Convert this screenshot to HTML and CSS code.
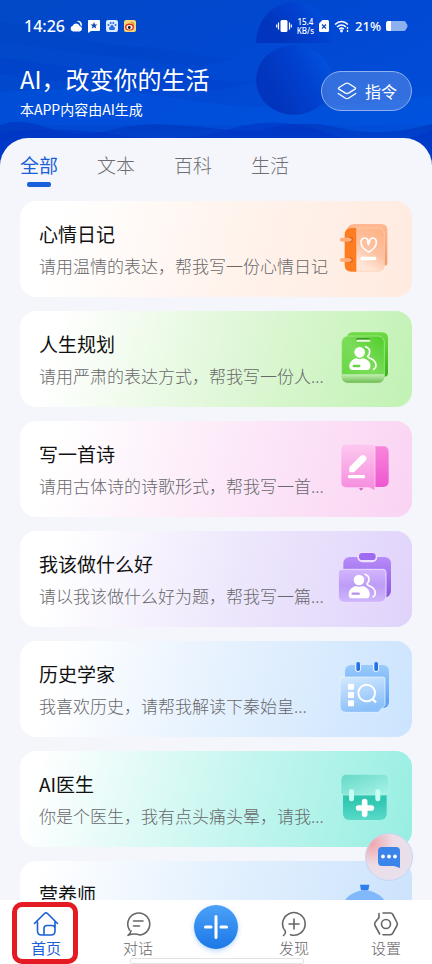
FILE: index.html
```html
<!DOCTYPE html>
<html lang="zh-CN">
    <head>
        <meta charset="utf-8">
        <meta name="viewport" content="width=device-width, initial-scale=1">
        <title>AI</title>
        <link rel="stylesheet" href="styles.css">
    </head>

    <body>
        <div class="app">

            <header class="header">
                <!-- sea and spheres behind the header -->
                <svg class="header-bg" viewBox="0 0 432 170" preserveAspectRatio="xMidYMin slice" aria-hidden="true">
                    <defs>
                        <linearGradient id="sea" x1="0" y1="0" x2="1" y2="1">
                            <stop offset="0" stop-color="#0149c6"/>
                            <stop offset=".45" stop-color="#0148d2"/>
                            <stop offset="1" stop-color="#0150dc"/>
                        </linearGradient>
                        <linearGradient id="ball" x1=".15" y1=".5" x2="1" y2=".1">
                            <stop offset="0" stop-color="#0235bd"/>
                            <stop offset=".5" stop-color="#0141cf"/>
                            <stop offset="1" stop-color="#0156e2"/>
                        </linearGradient>
                        <linearGradient id="swell" x1="0" y1="0" x2="0" y2="1">
                            <stop offset="0" stop-color="#0038c0" stop-opacity=".8"/>
                            <stop offset="1" stop-color="#0038c0" stop-opacity=".1"/>
                        </linearGradient>
                    </defs>
                    <rect width="432" height="170" fill="url(#sea)"/>
                    <path d="M0 22C50 28 80 44 130 46S200 60 240 58L200 66C140 62 60 50 0 42z" fill="#003ab8" opacity=".2"/>
                    <path d="M0 58C50 62 90 74 140 73S210 84 256 81L220 90C140 88 60 84 0 74z" fill="#0038c6" opacity=".25"/>
                    <path d="M0 92Q100 84 190 100T432 96V125H0z" fill="#0058e4" opacity=".4"/>
                    <path d="M256 43A38 41 0 0 1 332 43z" fill="url(#ball)"/>
                    <ellipse cx="294" cy="80" rx="38" ry="35" fill="url(#ball)"/>
                    <path d="M0 125Q20 117 48 128T110 130T190 126T258 131Q300 118 340 128T432 124V170H0z" fill="url(#swell)"/>
                    <path d="M0 132Q60 126 120 135T230 129T330 134T432 130V170H0z" fill="#0033c4" opacity=".55"/>
                </svg>

                <div class="status">
                    <span class="status-time">14:26</span>
                    <svg width="66" height="14" viewBox="0 0 66 14" aria-hidden="true">
                        <path d="M3 12.500a3 3 0 0 1-.3-5.800 3.800 3.800 0 0 1 7 .3 2.800 2.800 0 0 1 0 5.500zM6.500 2.200a3.800 3.800 0 0 1 5 5.300l-1-1.200a4.800 4.800 0 0 0-4-4.100z" fill="#fff"/>
                        <path d="M19 1h10q1 0 1 1v9q0 1-1 1h-8l-3 2V2q0-1 1-1z" fill="#fff"/>
                        <path d="M24 3l1 2.500h2.500l-2 1.500.8 2.600L24 8.200 21.700 9.600l.8-2.600-2-1.500H23z" fill="#1747b0"/>
                        <rect x="36" y="1" width="12" height="12" rx="2" fill="#d9ebff"/>
                        <g fill="#2d6be0">
                            <circle cx="38.500" cy="6" r="1"/><circle cx="40.700" cy="4" r="1"/><circle cx="43.300" cy="4" r="1"/><circle cx="45.500" cy="6" r="1"/>
                            <path d="M42 5.500l3 3.500q.5 2-1.500 2h-3q-2 0-1.500-2z"/>
                        </g>
                        <rect x="54" y="1" width="12" height="12" rx="2" fill="#fbd474"/>
                        <ellipse cx="59.500" cy="8" rx="4.500" ry="3.600" fill="#d8301f"/>
                        <ellipse cx="59.500" cy="8.300" rx="3" ry="2.300" fill="#fff"/>
                        <circle cx="59.300" cy="8.500" r="1.400" fill="#111"/>
                        <path d="M61 3.500q3-.5 3 2.500" fill="none" stroke="#e77c21"/>
                    </svg>
                    <span class="status-gap"></span>
                    <svg width="16" height="14" viewBox="0 0 16 14" aria-hidden="true">
                        <rect x="4.500" y="1" width="7" height="12" rx="1.500" fill="#fff"/>
                        <path d="M2.500 3.500v7M13.500 3.500v7M.7 5.500v3M15.300 5.500v3" stroke="#fff" stroke-width="1.200"/>
                    </svg>
                    <span class="status-speed"><span>15.4</span><span>KB/s</span></span>
                    <svg width="10" height="14" viewBox="0 0 10 14" aria-hidden="true">
                        <path d="M3.500 1H8.500q1.500 0 1.500 1.500v9q0 1.500-1.500 1.500h-7Q0 13 0 11.500v-7z" fill="#fff"/>
                        <path d="M3 5.500l4 4M7 5.500l-4 4" stroke="#1049b4" stroke-width="1.300"/>
                    </svg>
                    <svg width="16" height="14" viewBox="0 0 16 14" fill="none" stroke="#fff" stroke-width="1.600" aria-hidden="true">
                        <path d="M1 5.500Q7.500-.5 14 5.500M3 8q4.500-4 9 0M5.200 10.200q2.300-2 4.600 0"/>
                        <circle cx="7.500" cy="12" r=".6"/>
                        <path d="M13.500 8v2M13.500 11v2" stroke-width="1.300"/>
                    </svg>
                    <span class="status-battery">21%</span>
                    <svg width="22" height="12" viewBox="0 0 22 12" aria-hidden="true">
                        <path d="M2.500 1H18q2 0 2 2 1.500 1 1.500 3T20 9q0 2-2 2H2.500Q0 11 0 8.500v-5Q0 1 2.500 1z" fill="#8db1ee"/>
                        <path d="M2.500 1H5v10H2.500Q0 11 0 8.500v-5Q0 1 2.500 1z" fill="#fff"/>
                    </svg>
                </div>

                <div class="hero">
                    <div class="hero-text">
                        <h1>AI，改变你的生活</h1>
                        <p>本APP内容由AI生成</p>
                    </div>
                    <button class="order-btn" type="button">
                        <svg width="20" height="18" viewBox="0 0 20 18" fill="none" stroke="#fff" stroke-width="1.300" stroke-linecap="round" stroke-linejoin="round" aria-hidden="true">
                            <path d="M8.500 1.500q1.500-.8 3 0L18 5.500q1.200.8 0 1.600l-6.500 4q-1.500.8-3 0L2 7.100q-1.200-.8 0-1.600z"/>
                            <path d="M1.200 11.500l7.300 4.700q1.500.8 3 0l7.300-4.700"/>
                        </svg>
                        指令
                    </button>
                </div>
            </header>

            <main class="sheet">
                <nav class="tabs">
                    <a class="tab active" href="#all">全部</a>
                    <a class="tab" href="#text">文本</a>
                    <a class="tab" href="#wiki">百科</a>
                    <a class="tab" href="#life">生活</a>
                </nav>

                <div class="list">
                    <article class="card orange">
                        <div class="card-text">
                            <h2>心情日记</h2>
                            <p>请用温情的表达，帮我写一份心情日记</p>
                        </div>
                        <svg class="card-icon" viewBox="51 60 168 168" aria-hidden="true">
                            <defs>
                                <linearGradient id="o1" x1="0" y1="0" x2="0" y2="1"><stop offset="0" stop-color="#ffb891"/><stop offset="1" stop-color="#f29a69"/></linearGradient>
                                <linearGradient id="o2" x1="1" y1="0" x2=".6" y2="1"><stop offset="0" stop-color="#ffb083"/><stop offset=".6" stop-color="#fdc1a0"/><stop offset="1" stop-color="#ffe6d8"/></linearGradient>
                            </defs>
                            <path d="M103 72h81q18 0 18 18v99q0 8-8 8L180 90H80q5-18 23-18z" fill="url(#o1)"/>
                            <path d="M108 84h66q19 0 19 19v92q0 19-19 19h-66z" fill="url(#o2)" stroke="#ffd1b5" stroke-width="2"/>
                            <path d="M94 84h15v131H94q-20 0-20-20v-91q0-20 20-20z" fill="#ff7d22"/>
                            <path d="M65 119h26M65 180h26" stroke="#ffac78" stroke-width="11" stroke-linecap="round"/>
                            <path d="M89 112q8 0 8 7t-8 8M89 173q8 0 8 7t-8 8" fill="none" stroke="#cf5718" stroke-width="3"/>
                            <path d="M146 134q-6-8-2-13-2-7-10-7-12 1-11 15 2 16 23 27 21-11 23-27 1-14-11-15-10 1-10 15" fill="none" stroke="#fff" stroke-width="5" stroke-linecap="round" stroke-linejoin="round"/>
                            <rect x="121" y="170" width="48" height="11" rx="4" fill="#fff"/>
                        </svg>
                    </article>

                    <article class="card green">
                        <div class="card-text">
                            <h2>人生规划</h2>
                            <p>请用严肃的表达方式，帮我写一份人...</p>
                        </div>
                        <svg class="card-icon" viewBox="51 62 168 168" aria-hidden="true">
                            <defs>
                                <linearGradient id="g1" x1="0" y1="0" x2="0" y2="1"><stop offset="0" stop-color="#6ddb43"/><stop offset="1" stop-color="#38b21c"/></linearGradient>
                                <linearGradient id="g2" x1="1" y1="0" x2="0" y2="1"><stop offset="0" stop-color="#4fcd29"/><stop offset=".5" stop-color="#7bdd5a"/><stop offset="1" stop-color="#65d540"/></linearGradient>
                                <linearGradient id="g3" x1="0" y1="0" x2="0" y2="1"><stop offset="0" stop-color="#c5f0b4"/><stop offset="1" stop-color="#70bd55"/></linearGradient>
                            </defs>
                            <path d="M99 69h87q18 0 18 18v104q0 10-11 12L80 84q4-15 19-15z" fill="url(#g1)"/>
                            <rect x="65" y="80" width="128" height="140" rx="19" fill="url(#g2)" stroke="#c0f0a8" stroke-width="2"/>
                            <path d="M65 195h128v6q0 19-19 19H84q-19 0-19-19z" fill="url(#g3)"/>
                            <rect x="108" y="86" width="42" height="10" rx="5" fill="#3c9f22"/>
                            <path d="M112 94h36" stroke="#efffe9" stroke-width="6" stroke-linecap="round"/>
                            <circle cx="119" cy="129" r="16" fill="#fff"/>
                            <path d="M108 147q11 5 23 0 22 8 20 24 0 11-10 11H98q-10 0-10-11 0-17 20-24z" fill="#fff"/>
                            <path d="M137 112q12 4 12 15 0 8-6 14 1 4 8 6 17 8 17 22 0 7-7 11" fill="none" stroke="#fff" stroke-width="5" stroke-linecap="round"/>
                            <path d="M101 170h17" stroke="#68d345" stroke-width="7" stroke-linecap="round"/>
                        </svg>
                    </article>

                    <article class="card pink">
                        <div class="card-text">
                            <h2>写一首诗</h2>
                            <p>请用古体诗的诗歌形式，帮我写一首...</p>
                        </div>
                        <svg class="card-icon" viewBox="51 63 168 168" aria-hidden="true">
                            <defs>
                                <linearGradient id="p1" x1="0" y1="0" x2="0" y2="1"><stop offset="0" stop-color="#f985db"/><stop offset="1" stop-color="#ed57d0"/></linearGradient>
                                <linearGradient id="p2" x1="0" y1="0" x2="0" y2="1"><stop offset="0" stop-color="#fdc9f0"/><stop offset="1" stop-color="#f58add"/></linearGradient>
                            </defs>
                            <path d="M115 205h17l-9 10z" fill="#d854be"/>
                            <path d="M155 82h34q17 0 17 17v88q0 17-17 17h-34z" fill="url(#p1)"/>
                            <path d="M80 75h74q11 0 11 11v129l-17-9H80q-17 0-17-17V92q0-17 17-17z" fill="url(#p2)" stroke="#ffe3f9" stroke-width="2"/>
                            <path d="M88 160v-15l34-35q7-5 14 1 7 7 1 14l-35 35z" fill="#fff"/>
                            <rect x="84" y="168" width="51" height="10" rx="4" fill="#fff"/>
                        </svg>
                    </article>

                    <article class="card purple">
                        <div class="card-text">
                            <h2>我该做什么好</h2>
                            <p>请以我该做什么好为题，帮我写一篇...</p>
                        </div>
                        <svg class="card-icon" viewBox="51 65 168 168" aria-hidden="true">
                            <defs>
                                <linearGradient id="v1" x1="0" y1="0" x2="0" y2="1"><stop offset="0" stop-color="#b88cfa"/><stop offset="1" stop-color="#8858dd"/></linearGradient>
                                <linearGradient id="v2" x1="0" y1="0" x2="0" y2="1"><stop offset="0" stop-color="#d2b5ff"/><stop offset=".5" stop-color="#bd9cf7"/><stop offset="1" stop-color="#cfb7fb"/></linearGradient>
                            </defs>
                            <rect x="70" y="86" width="143" height="121" rx="19" fill="url(#v1)"/>
                            <rect x="112" y="72" width="60" height="30" rx="15" fill="#eee1ff"/>
                            <rect x="117" y="74" width="50" height="21" rx="10" fill="#9d6af1"/>
                            <path d="M66 123h123q9 0 9 9v69q0 21-21 21H75q-20 0-20-20v-68q0-11 11-11z" fill="url(#v2)" stroke="#eadcff" stroke-width="3"/>
                            <circle cx="117" cy="155" r="16" fill="#fff"/>
                            <path d="M106 173q11 5 23 0 22 8 20 26 0 11-10 11H96q-10 0-10-11 0-19 20-26z" fill="#fff"/>
                            <path d="M135 138q12 4 12 15 0 8-6 14 1 4 8 6 17 8 17 22 0 7-7 11" fill="none" stroke="#fff" stroke-width="5" stroke-linecap="round"/>
                            <path d="M98 196h18" stroke="#b48ff1" stroke-width="7" stroke-linecap="round"/>
                        </svg>
                    </article>

                    <article class="card blue">
                        <div class="card-text">
                            <h2>历史学家</h2>
                            <p>我喜欢历史，请帮我解读下秦始皇...</p>
                        </div>
                        <svg class="card-icon" viewBox="51 66 168 168" aria-hidden="true">
                            <defs>
                                <linearGradient id="b1" x1="0" y1="0" x2="0" y2="1"><stop offset="0" stop-color="#9acbfc"/><stop offset="1" stop-color="#579df0"/></linearGradient>
                                <linearGradient id="b2" x1="0" y1="0" x2=".3" y2="1"><stop offset="0" stop-color="#d5eaff"/><stop offset="1" stop-color="#8bc0f9"/></linearGradient>
                            </defs>
                            <rect x="75" y="81" width="132" height="129" rx="18" fill="url(#b1)"/>
                            <rect x="105" y="74" width="18" height="28" rx="9" fill="#e5f2ff"/>
                            <rect x="159" y="74" width="18" height="28" rx="9" fill="#e5f2ff"/>
                            <rect x="109" y="72" width="11" height="27" rx="5" fill="#2771e7"/>
                            <rect x="163" y="72" width="11" height="27" rx="5" fill="#2771e7"/>
                            <path d="M66 117h123q6 0 6 6v78l-20 22H80q-20 0-20-20v-80q0-6 6-6z" fill="url(#b2)" stroke="#eff8ff" stroke-width="2"/>
                            <g fill="#fff">
                                <rect x="84" y="137" width="18" height="18" rx="2"/>
                                <rect x="84" y="162" width="18" height="18" rx="2"/>
                                <rect x="84" y="187" width="18" height="18" rx="2"/>
                            </g>
                            <circle cx="140" cy="165" r="25" fill="none" stroke="#fff" stroke-width="6"/>
                            <path d="M156 182l12 11" stroke="#fff" stroke-width="7"/>
                        </svg>
                    </article>

                    <article class="card teal">
                        <div class="card-text">
                            <h2>AI医生</h2>
                            <p>你是个医生，我有点头痛头晕，请我...</p>
                        </div>
                        <svg class="card-icon" viewBox="51 68 168 168" aria-hidden="true">
                            <defs>
                                <linearGradient id="t1" x1="0" y1="0" x2="0" y2="1"><stop offset="0" stop-color="#5cdbc9"/><stop offset=".5" stop-color="#2dc5ae"/><stop offset="1" stop-color="#59dac9"/></linearGradient>
                                <linearGradient id="t2" x1="0" y1="0" x2="1" y2="1"><stop offset="0" stop-color="#65d8c7"/><stop offset="1" stop-color="#a9f4e8"/></linearGradient>
                            </defs>
                            <rect x="69" y="90" width="131" height="128" rx="18" fill="url(#t1)"/>
                            <path d="M81 81h108q18 0 18 18v31q0 13-13 13H71q-8 0-8-8V99q0-18 18-18z" fill="url(#t2)" stroke="#b2f6ec" stroke-width="2"/>
                            <rect x="87" y="126" width="15" height="36" rx="7" fill="#c8fff5"/>
                            <rect x="166" y="126" width="15" height="36" rx="7" fill="#c8fff5"/>
                            <path d="M134 163v38M116 182h38" stroke="#fff" stroke-width="17" stroke-linecap="round"/>
                        </svg>
                    </article>

                    <article class="card sky">
                        <div class="card-text">
                            <h2>营养师</h2>
                        </div>
                        <svg class="card-icon" viewBox="51 399 168 168" aria-hidden="true">
                            <circle cx="134" cy="504" r="74" fill="#81b8fa"/>
                            <path d="M120 413h28l-3 17h-22z" fill="#2e7eed"/>
                        </svg>
                    </article>
                </div>
            </main>

            <button class="chat-btn" type="button" aria-label="AI">
                <svg width="24" height="22" viewBox="0 0 24 22" aria-hidden="true">
                    <path d="M5 1h14q4 0 4 4v17l-6-2H5q-4 0-4-4V5q0-4 4-4z" fill="#3b84e9"/>
                    <g fill="#fff"><circle cx="6" cy="10.500" r="1.900"/><circle cx="12" cy="10.500" r="1.900"/><circle cx="18" cy="10.500" r="1.900"/></g>
                </svg>
            </button>

            <nav class="bottom-nav">
                <a class="nav-item active" href="#home">
                    <svg width="26" height="26" viewBox="0 0 26 26" aria-hidden="true">
                        <path d="M1.500 12.500L11.500 2.500q1.500-1.200 3 0l10 10M4.500 11V20q0 4 4 4h9.500q4 0 4-4V11M11 23.500v-6q0-3 3-3h5q3 0 3 3"/>
                    </svg>
                    首页
                </a>
                <a class="nav-item" href="#chat">
                    <svg width="26" height="26" viewBox="0 0 26 26" aria-hidden="true">
                        <path d="M4.500 19A11 11 0 1 1 15 24Q9 22 3 24.300q2.500-2 3-4.500M8.500 10h9.500M8.500 15h6"/>
                    </svg>
                    对话
                </a>
                <button class="add-btn" type="button" aria-label="+">
                    <svg width="24" height="24" viewBox="0 0 24 24" fill="none" stroke="#fff" stroke-width="3" stroke-linecap="round" aria-hidden="true">
                        <path d="M12 1.500v21M1.500 12H7M17 12h5.500"/>
                    </svg>
                </button>
                <a class="nav-item" href="#find">
                    <svg width="26" height="26" viewBox="0 0 26 26" aria-hidden="true">
                        <path d="M2.500 24.500q2-1 2-4A11.300 11.300 0 1 1 9.500 23.700M13 8v10M8 13h10"/>
                    </svg>
                    发现
                </a>
                <a class="nav-item" href="#settings">
                    <svg width="26" height="26" viewBox="0 0 26 26" aria-hidden="true">
                        <path d="M10 2h7.500q1.500 0 2.300 1.500L24 11.500q.7 1.500 0 3l-4.200 7.700q-.8 1.600-2.300 1.600H10M6 2.500v4L2 11.500q-.7 1.500 0 3L6.700 23"/>
                        <circle cx="13" cy="13" r="4.500"/>
                    </svg>
                    设置
                </a>
            </nav>
        </div>
    </body>
</html>
```

FILE: styles.css
```css
* {
    margin: 0;
    padding: 0;
    box-sizing: border-box;
}

html, body {
    height: 100%;
    overflow: hidden;
}

body {
    font-family: "Noto Sans CJK SC", sans-serif;
    background: #f5f6fb;
}

a {
    color: inherit;
    text-decoration: none;
}

button {
    border: 0;
    font-family: inherit;
    cursor: pointer;
}

.app {
    position: relative;
    display: flex;
    flex-direction: column;
    height: 100vh;
    overflow: hidden;
}

/* header */
.header {
    color: #fff;
}

.header-bg {
    position: absolute;
    top: 0;
    left: 0;
    width: 100%;
    height: 170px;
    z-index: -1;
}

.status {
    display: flex;
    align-items: center;
    gap: 5px;
    height: 52px;
    padding: 0 24px;
    font-family: "Noto Sans", sans-serif;
    font-weight: 500;
}

.status-time {
    font-size: 16px;
    line-height: 20px;
}

.status-gap {
    flex: 1;
}

.status-speed {
    display: flex;
    flex-direction: column;
    align-items: center;
    font-size: 8px;
    line-height: 9px;
}

.status-battery {
    font-size: 13px;
    line-height: 20px;
}

.hero {
    display: flex;
    align-items: center;
    justify-content: space-between;
    padding: 11px 20px 19px;
}

.hero-text {
    display: flex;
    flex-direction: column;
    gap: 4px;
}

.hero h1 {
    font-size: 24px;
    font-weight: 400;
    line-height: 32px;
}

.hero p {
    font-size: 14px;
    line-height: 20px;
}

.order-btn {
    display: flex;
    align-items: center;
    gap: 8px;
    height: 40px;
    padding: 0 14px 0 15px;
    border: 1px solid #8fb0ee;
    border-radius: 20px;
    background: rgba(255, 255, 255, 0.2);
    color: #fff;
    font-size: 16px;
}

/* content */
.sheet {
    display: flex;
    flex: 1;
    flex-direction: column;
    min-height: 0;
    border-radius: 28px 28px 0 0;
    background: #f5f6fb;
}

.tabs {
    display: flex;
    gap: 39px;
    padding: 13px 20px 14px;
}

.tab {
    display: flex;
    flex-direction: column;
    align-items: center;
    gap: 3px;
    color: #6e6e72;
    font-size: 19px;
    font-weight: 300;
    line-height: 28px;
}

.tab::after {
    content: "";
    width: 24px;
    height: 5px;
    border-radius: 2px;
}

.tab.active {
    color: #1a60d8;
    font-weight: 400;
}

.tab.active::after {
    background: #1a60d8;
}

.list {
    display: flex;
    flex: 1;
    flex-direction: column;
    gap: 14px;
    min-height: 0;
    padding: 0 20px;
    overflow-y: auto;
    scrollbar-width: none;
}

.card {
    display: flex;
    flex-shrink: 0;
    align-items: flex-start;
    min-height: 96px;
    padding: 19px;
    border-radius: 16px;
}

.card-text {
    display: flex;
    flex: 1;
    flex-direction: column;
    gap: 6px;
    min-width: 0;
}

.card h2 {
    color: #111;
    font-size: 19px;
    font-weight: 400;
    line-height: 28px;
}

.card p {
    color: #68686b;
    font-size: 17px;
    font-weight: 300;
    line-height: 24px;
    white-space: nowrap;
}

.card-icon {
    flex-shrink: 0;
    width: 56px;
    height: 56px;
}

.orange { background: linear-gradient(105deg, #fff 10%, #fff3ec 55%, #ffeadf); }
.green  { background: linear-gradient(105deg, #fff 10%, #dff7d7 55%, #c1f2b3); }
.pink   { background: linear-gradient(105deg, #fff 10%, #fce8f8 55%, #fad3f3); }
.purple { background: linear-gradient(105deg, #fff 10%, #ede7fc 55%, #e0d3fb); }
.blue   { background: linear-gradient(105deg, #fff 10%, #e3f0fe 55%, #cbe4fe); }
.teal   { background: linear-gradient(105deg, #fff 5%, #c5f6ef 55%, #97eee2); }
.sky    { background: linear-gradient(105deg, #fff 5%, #e0effe 55%, #cbe2fc); }

/* floating chat button */
.chat-btn {
    position: absolute;
    right: 19px;
    bottom: 83px;
    display: flex;
    align-items: center;
    justify-content: center;
    width: 48px;
    height: 48px;
    border: 1px solid #c3d6f3;
    border-radius: 50%;
    background: radial-gradient(circle at 12% 20%, #f0a5ad, #ecdde6 40%, #e5e2f0);
}

/* bottom navigation */
.bottom-nav {
    position: relative;
    display: flex;
    height: 64px;
    background: #fff;
}

/* home indicator */
.bottom-nav::after {
    content: "";
    position: absolute;
    bottom: 0;
    left: 30%;
    width: 40%;
    height: 4px;
    border: 1px solid #e2e2e2;
    border-radius: 2px;
    background: #fff;
}

.nav-item {
    position: relative;
    display: flex;
    flex: 1;
    flex-direction: column;
    align-items: center;
    padding-top: 11px;
    color: #666669;
    font-size: 15px;
    font-weight: 300;
    line-height: 22px;
}

.nav-item svg {
    fill: none;
    stroke: currentColor;
    stroke-width: 1.6px;
    stroke-linecap: round;
    stroke-linejoin: round;
}

.nav-item.active {
    color: #1a60d8;
    font-weight: 400;
}

.nav-item.active::before {
    content: "";
    position: absolute;
    top: 2px;
    bottom: 0;
    left: 12px;
    right: 14px;
    border: 5px solid #e41b23;
    border-radius: 10px;
}

.add-btn {
    display: flex;
    align-items: center;
    justify-content: center;
    width: 44px;
    height: 44px;
    margin: 5px 10px;
    border-radius: 50%;
    background: linear-gradient(#4ba1f8, #1b78e6);
    box-shadow: 0 2px 5px rgba(38, 126, 235, 0.3);
}
```
